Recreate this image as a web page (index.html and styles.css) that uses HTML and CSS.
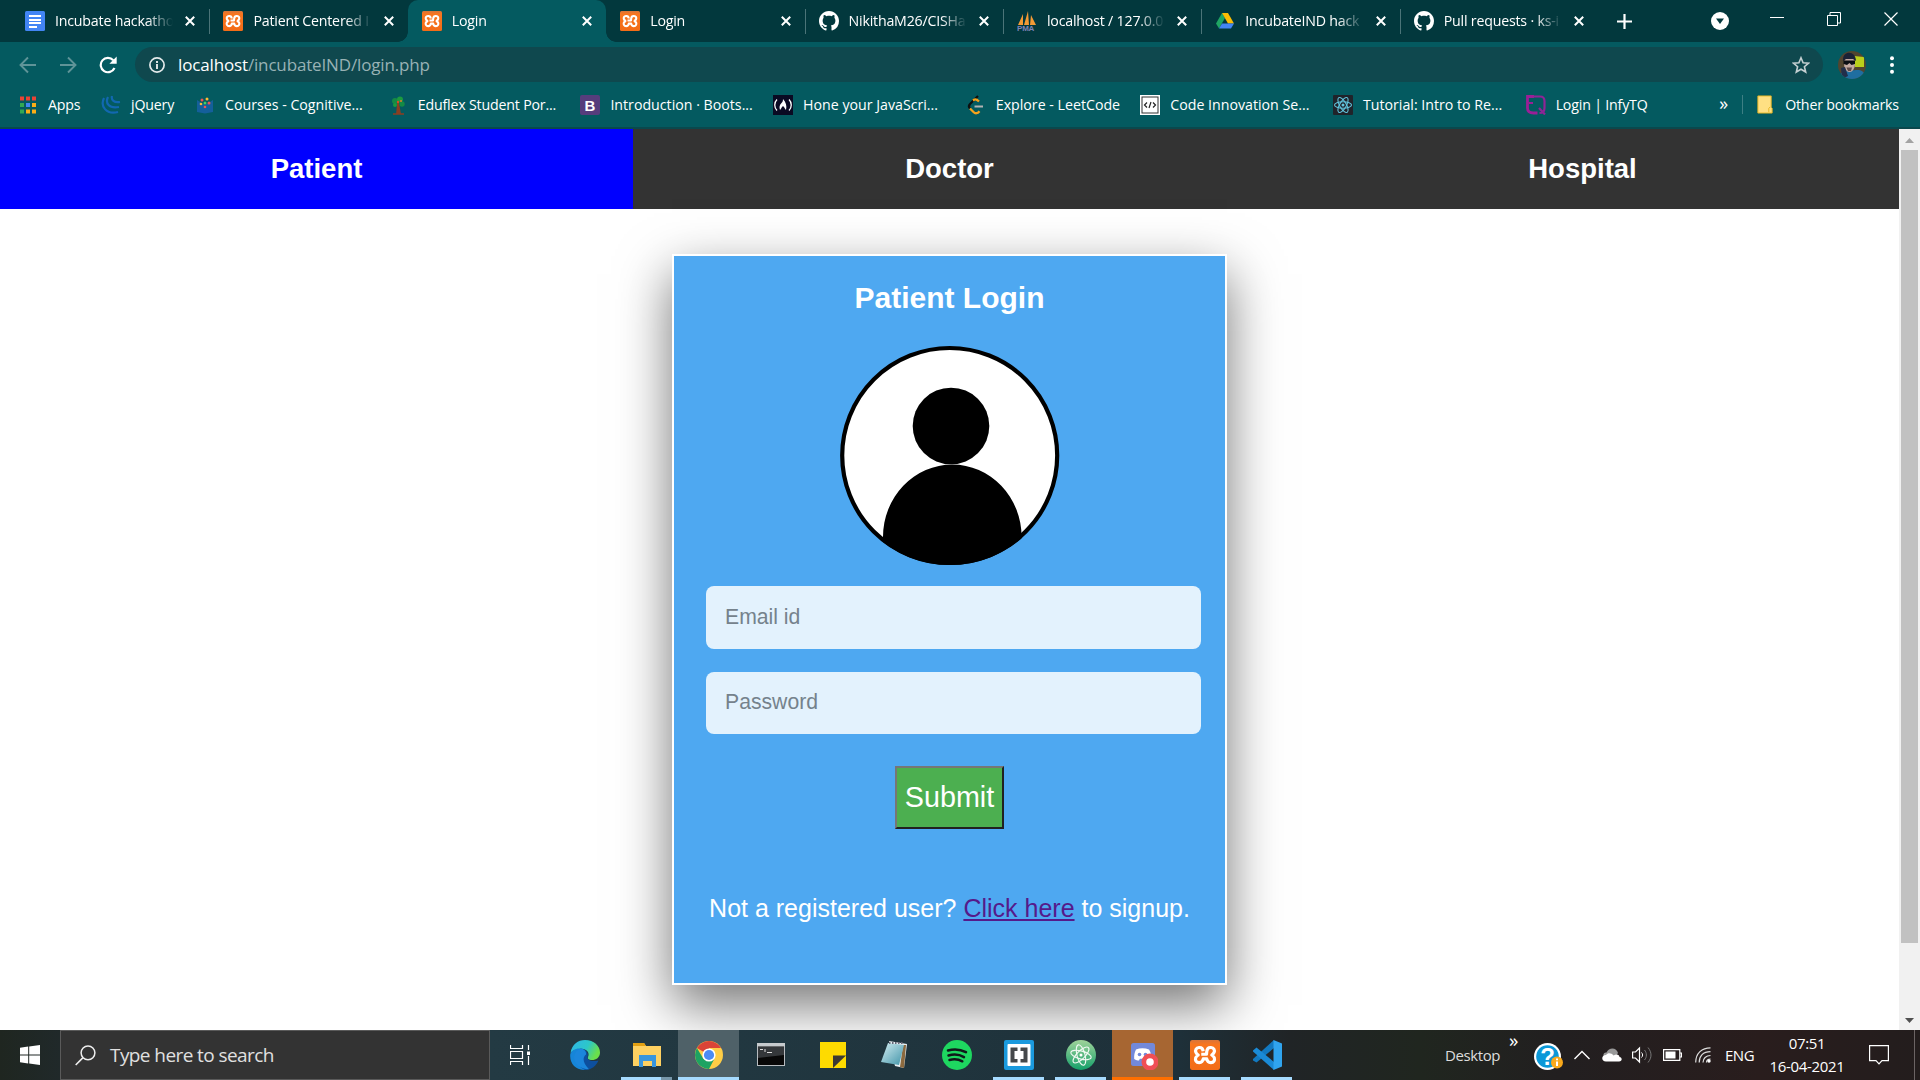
FILE: index.html
```html
<!DOCTYPE html>
<html lang="en">
<head>
<meta charset="utf-8">
<title>Login</title>
<link rel="stylesheet" href="styles.css">
</head>
<body>
<svg class="defs" width="0" height="0">
  <defs>
    <linearGradient id="gx" x1="0" y1="0" x2="0" y2="1"><stop offset="0" stop-color="#d9753a"/><stop offset=".15" stop-color="#f8761f"/><stop offset="1" stop-color="#f36c17"/></linearGradient>
    <linearGradient id="ge" x1="0" y1="0" x2="1" y2=".4"><stop offset="0" stop-color="#2fb4ea"/><stop offset=".6" stop-color="#2cc7c8"/><stop offset="1" stop-color="#6be04a"/></linearGradient>
    <linearGradient id="gn" x1="0" y1="0" x2="1" y2="1"><stop offset="0" stop-color="#d4eef2"/><stop offset="1" stop-color="#3f93a8"/></linearGradient>
    <linearGradient id="ga" x1="0" y1="0" x2="0" y2="1"><stop offset="0" stop-color="#a0d39a"/><stop offset="1" stop-color="#14a06a"/></linearGradient>
    <clipPath id="face"><circle cx="14" cy="14" r="14"/></clipPath>
    <clipPath id="disc"><circle cx="110" cy="110.500" r="109.500"/></clipPath>
  </defs>
  <symbol id="xampp" viewBox="0 0 20 20"><rect width="20" height="20" rx="1.500" fill="url(#gx)"/><path d="M8.800 7.500C8.600 5.600 7.500 4.900 6 5c-2 .1-2.600 1.800-2.100 3.200.3.900.9 1.300 1.600 1.800-.8.500-1.400 1-1.700 1.900-.5 1.500.3 3.200 2.300 3.200 1.700 0 2.500-1.100 2.700-2.500h2.400c.2 1.400 1 2.500 2.700 2.500 2 0 2.800-1.700 2.300-3.200-.3-.9-.9-1.400-1.700-1.900.7-.5 1.300-.9 1.600-1.800C16.600 6.800 16 5.100 14 5c-1.500-.1-2.600.6-2.800 2.500L11 9.500H7.500" fill="none" stroke="#fff" stroke-width="2.100" stroke-linejoin="round"/></symbol>
  <symbol id="github" viewBox="0 0 16 16"><path fill="#fff" fill-rule="evenodd" d="M8 0C3.580 0 0 3.580 0 8c0 3.540 2.290 6.530 5.470 7.590.4.070.55-.17.55-.38 0-.19-.01-.82-.01-1.490-2.010.37-2.530-.49-2.690-.94-.09-.23-.48-.94-.82-1.130-.28-.15-.68-.52-.01-.53.63-.01 1.080.58 1.230.82.72 1.210 1.870.87 2.330.66.070-.52.28-.87.51-1.070-1.780-.2-3.640-.89-3.640-3.950 0-.87.31-1.590.82-2.150-.08-.2-.36-1.020.08-2.120 0 0 .67-.21 2.200.82.640-.18 1.320-.27 2-.27s1.360.09 2 .27c1.530-1.040 2.200-.82 2.200-.82.440 1.100.16 1.920.08 2.120.51.560.82 1.270.82 2.150 0 3.070-1.870 3.750-3.650 3.950.29.25.54.73.54 1.480 0 1.070-.01 1.930-.01 2.200 0 .21.15.46.55.38A8.010 8.010 0 0 0 16 8c0-4.420-3.580-8-8-8z"/></symbol>
  <symbol id="x" viewBox="0 0 10 10"><path d="M.8.8l8.400 8.400M9.200.8L.8 9.200" stroke="#fff" stroke-width="2"/></symbol>
</svg>

<header class="browser">
  <div class="tabstrip">
    <div class="tab"><svg class="fav" viewBox="0 0 20 20"><rect width="20" height="20" rx="1.500" fill="#4285f4"/><path d="M4 5h12M4 9h12M4 12h12M4 16h8" stroke="#fff" stroke-width="1.800"/></svg><span class="tab-title">Incubate hackathon</span><svg class="close"><use href="#x"/></svg></div>
    <div class="tab sep"><svg class="fav"><use href="#xampp"/></svg><span class="tab-title">Patient Centered I</span><svg class="close"><use href="#x"/></svg></div>
    <div class="tab active"><svg class="fav"><use href="#xampp"/></svg><span class="tab-title">Login</span><svg class="close"><use href="#x"/></svg></div>
    <div class="tab"><svg class="fav"><use href="#xampp"/></svg><span class="tab-title">Login</span><svg class="close"><use href="#x"/></svg></div>
    <div class="tab sep"><svg class="fav"><use href="#github"/></svg><span class="tab-title">NikithaM26/CISHa</span><svg class="close"><use href="#x"/></svg></div>
    <div class="tab sep"><svg class="fav" viewBox="0 0 20 20"><path d="M1 14L6 3v11zM7 14L11 0l1 14zM13 14l1-10 5 10z" fill="#f39a35"/><text x="0" y="19.500" class="pma">PMA</text></svg><span class="tab-title">localhost / 127.0.0</span><svg class="close"><use href="#x"/></svg></div>
    <div class="tab sep"><svg class="fav" viewBox="0 0 20 20"><path d="M7 2L1 12.500l3 5L10 7z" fill="#1fa463"/><path d="M7 2h6l6 10.500h-6z" fill="#fbbc04"/><path d="M4 17.500l3-5h12l-3 5z" fill="#4285f4"/></svg><span class="tab-title">IncubateIND hack</span><svg class="close"><use href="#x"/></svg></div>
    <div class="tab sep"><svg class="fav"><use href="#github"/></svg><span class="tab-title">Pull requests · ks-i</span><svg class="close"><use href="#x"/></svg></div>
    <div class="newtab"><svg width="15" height="15" viewBox="0 0 15 15"><path d="M7.500 0v15M0 7.500h15" stroke="#fff" stroke-width="2.200"/></svg></div>
    <div class="winctl">
      <svg width="18" height="18" viewBox="0 0 18 18"><circle cx="9" cy="9" r="9" fill="#fff"/><path d="M5 6.500h8L9 12z" fill="#02383d"/></svg>
      <svg width="14" height="14" viewBox="0 0 14 14"><path d="M0 5.500h14" stroke="#fff"/></svg>
      <svg width="14" height="14" viewBox="0 0 14 14"><path d="M.5 3.500h10v10H.5zM3 3V.5h10.500v10.500H11" stroke="#fff" fill="none"/></svg>
      <svg width="14" height="14" viewBox="0 0 14 14"><path d="M.5.5l13 13M13.500.5l-13 13" stroke="#fff" stroke-width="1.200"/></svg>
    </div>
  </div>
  <div class="toolbar">
    <svg class="tb" viewBox="0 0 18 18"><path d="M17 9H2M9 1.500L1.500 9 9 16.500" stroke="#5f9498" stroke-width="1.900" fill="none"/></svg>
    <svg class="tb" viewBox="0 0 18 18"><path d="M1 9h15M9 1.500L16.500 9 9 16.500" stroke="#5f9498" stroke-width="1.900" fill="none"/></svg>
    <svg class="tb" viewBox="0 0 18 18"><path d="M15.500 12A7.200 7.200 0 1 1 14.300 4.200" stroke="#fff" stroke-width="2.200" fill="none"/><path d="M17.700.5v7.300h-7.300z" fill="#fff"/></svg>
    <div class="omnibox">
      <svg width="16" height="16" viewBox="0 0 16 16"><circle cx="8" cy="8" r="7.100" fill="none" stroke="#e4eaeb" stroke-width="1.700"/><path d="M8 7v5M8 4v1.900" stroke="#e4eaeb" stroke-width="1.900"/></svg>
      <span class="url">localhost<span class="path">/incubateIND/login.php</span></span>
      <svg class="star" width="18" height="18" viewBox="0 0 18 18"><path d="M9 1.800l2.100 5 5.400.4-4.100 3.500 1.300 5.300L9 13.200 4.300 16l1.300-5.300L1.500 7.200l5.400-.4z" fill="none" stroke="#c4cfd1" stroke-width="1.600"/></svg>
    </div>
    <svg width="28" height="28" viewBox="0 0 28 28"><g clip-path="url(#face)"><rect width="28" height="28" fill="#51452f"/><path d="M16 5l10 1v10h-9z" fill="#b9cf1a"/><path d="M1 28c1-8 8-10 13-9s12-3 14 9z" fill="#1f6ea0"/><ellipse cx="11.500" cy="13" rx="5.500" ry="8" fill="#c3a9a2"/><path d="M5 10C4-1 18-1 18 10l-3-2H8z" fill="#1b2236"/><path d="M5.500 9.500h11.500v3.500l-3.500 1-2-2-2.500 2-3.500-1z" fill="#0b0e14"/><path d="M3 17l4-1 3 9-6 3z" fill="#222e4a"/><path d="M8.500 16.500h5.500l-1 3.500h-3z" fill="#5f4a48"/></g></svg>
    <svg class="dots" width="4" height="18" viewBox="0 0 4 18"><circle cx="2" cy="2.200" r="2" fill="#fff"/><circle cx="2" cy="9" r="2" fill="#fff"/><circle cx="2" cy="15.800" r="2" fill="#fff"/></svg>
  </div>
  <nav class="bookmarks">
    <a class="bm w-apps"><svg viewBox="0 0 20 20"><path d="M2 3.500h4M8 3.500h4M14 3.500h4" stroke="#ea4335" stroke-width="4"/><path d="M2 10h4M2 16.500h4" stroke="#34a853" stroke-width="4"/><path d="M8 10h4" stroke="#4285f4" stroke-width="4"/><path d="M8 16.500h4M14 16.500h4M14 10h4" stroke="#fbae17" stroke-width="4"/></svg>Apps</a>
    <a class="bm w-jq"><svg viewBox="0 0 20 20"><path d="M3 3c-4 8 2 17 14 14M7 2c-3 6 1 12 11 10M11 1c-1 4 2 7 8 6" fill="none" stroke="#1268b0" stroke-width="2.200"/></svg>jQuery</a>
    <a class="bm w wide"><svg viewBox="0 0 20 20"><path d="M2 5v12l8 1.500 8-1.500V5l-8 5z" fill="#145f9b"/><circle cx="7" cy="5" r="1.500" fill="#e55"/><circle cx="12" cy="4" r="1.500" fill="#fb3"/><circle cx="10" cy="8" r="1.500" fill="#4c6"/><circle cx="14" cy="8" r="1.500" fill="#e55"/><circle cx="6" cy="9" r="1.300" fill="#fb3"/><circle cx="10" cy="12" r="1.300" fill="#e55"/></svg>Courses - Cognitive...</a>
    <a class="bm w"><svg viewBox="0 0 20 20"><path d="M10 7l-1 11h3zM5 19h11" stroke="#8a3f22" stroke-width="1.600" fill="#8a3f22"/><circle cx="7" cy="6" r="3" fill="#158a45"/><circle cx="12" cy="4.500" r="3" fill="#1c9a3f"/><circle cx="14" cy="9" r="2.700" fill="#158a45"/><circle cx="7" cy="10" r="2" fill="#1c9a3f"/><circle cx="10" cy="7" r="1.200" fill="#d84a2b"/><circle cx="13" cy="6" r="1" fill="#e0792b"/></svg>Eduflex Student Por...</a>
    <a class="bm w wide"><svg viewBox="0 0 20 20"><rect width="20" height="20" rx="2" fill="#563d7c"/><text x="10" y="15.500" class="bs">B</text></svg>Introduction · Boots...</a>
    <a class="bm w wide"><svg viewBox="0 0 20 20"><rect width="20" height="20" fill="#0a0a23"/><path d="M4 4.500c-3 3-3 8 0 11M16 4.500c3 3 3 8 0 11" stroke="#fff" stroke-width="1.300" fill="none"/><path d="M10 4c3 3 4 7 3 11-1-1-1-2-3-4-2 2-2 3-3 4-1-3-.5-5 1.500-7C9.500 7 10 6 10 4z" fill="#fff"/></svg>Hone your JavaScri...</a>
    <a class="bm w-leet wide"><svg viewBox="0 0 20 20"><path d="M12 1L4 9c-1.500 1.600-1.500 3 0 4.500" fill="none" stroke="#0c1010" stroke-width="2.200"/><path d="M7 5.500l1.500-1c1.500-.6 2.500 0 4.500 2M4 13.500l3.500 3.500c2 2 4 1.500 6-.8" fill="none" stroke="#f7a21b" stroke-width="2.300"/><path d="M8.500 11.500H17" stroke="#b3b3b3" stroke-width="2"/></svg>Explore - LeetCode</a>
    <a class="bm w wide"><svg viewBox="0 0 20 20"><rect width="20" height="20" fill="#fff"/><rect x="2" y="2" width="16" height="16" fill="none" stroke="#333"/><path d="M7 7.500L4.500 10 7 12.500M13 7.500l2.500 2.500-2.500 2.500M11 7l-2 6" stroke="#222" stroke-width="1.200" fill="none"/></svg>Code Innovation Se...</a>
    <a class="bm w wide"><svg viewBox="0 0 20 20"><rect width="20" height="20" rx="1" fill="#20232a"/><g fill="none" stroke="#61c5de" stroke-width="1.100"><ellipse cx="10" cy="10" rx="8.500" ry="3.300"/><ellipse cx="10" cy="10" rx="8.500" ry="3.300" transform="rotate(60 10 10)"/><ellipse cx="10" cy="10" rx="8.500" ry="3.300" transform="rotate(120 10 10)"/></g><circle cx="10" cy="10" r="1.500" fill="#61c5de"/></svg>Tutorial: Intro to Re...</a>
    <a class="bm w-inf"><svg viewBox="0 0 20 20"><path d="M8 1.500H1.500V13c0 3 2 5 6 5h4" fill="none" stroke="#9a1f97" stroke-width="2.800"/><path d="M7 1.500h7c3 0 4.500 2 4.500 4.500V13c0 3-2 5-5 5M13 13l6 6.500" fill="none" stroke="#8f2496" stroke-width="2.200"/><path d="M3 8h4" stroke="#9a1f97" stroke-width="2"/></svg>Login | InfyTQ</a>
    <span class="more">»</span>
    <a class="bm other"><svg class="folder" viewBox="0 0 16 20"><path d="M.5 1h14v12l1 1v5H.5z" fill="#ffe083" stroke="#e6b422"/><path d="M12 18v-4l1.500-1.500" stroke="#e6b422" fill="none"/></svg>Other bookmarks</a>
  </nav>
</header>

<main class="viewport">
  <div class="page">
    <nav class="roles"><a class="on">Patient</a><a>Doctor</a><a>Hospital</a></nav>
    <section class="card">
      <h1>Patient Login</h1>
      <svg class="avatar" viewBox="0 0 220 221"><circle cx="109.700" cy="110.500" r="107.500" fill="#fff" stroke="#000" stroke-width="4.200"/><g clip-path="url(#disc)"><circle cx="111" cy="81" r="38.300"/><path d="M43 230v-38a69.300 72.500 0 0 1 138.600 0v38z"/></g></svg>
      <form class="login">
        <input class="field" type="text" placeholder="Email id">
        <input class="field second" type="password" placeholder="Password">
        <button class="submit" type="button">Submit</button>
      </form>
      <p class="signup">Not a registered user? <a href="#">Click here</a> to signup.</p>
    </section>
  </div>
  <div class="scrollbar">
    <svg width="21" height="21" viewBox="0 0 21 21"><path d="M6 14h9l-4.500-5z" fill="#a3a3a3"/></svg>
    <div class="thumb"></div>
    <svg class="down" width="21" height="21" viewBox="0 0 21 21"><path d="M6 9h9l-4.500 5z" fill="#505050"/></svg>
  </div>
</main>

<footer class="taskbar">
  <div class="start"><svg width="20" height="20" viewBox="0 0 20 20"><path d="M0 2.800l8.200-1.200v7.900H0zM9.200 1.400L20 0v9.500H9.200zM0 10.500h8.200v7.900L0 17.200zM9.200 10.500H20V20L9.200 18.600z" fill="#fff"/></svg></div>
  <div class="search"><svg width="21" height="21" viewBox="0 0 21 21"><circle cx="13" cy="7.800" r="6.900" fill="none" stroke="#eee" stroke-width="1.500"/><path d="M8 12.600L.7 20" stroke="#eee" stroke-width="1.600"/></svg>Type here to search</div>
  <div class="taskview"><svg width="20" height="20" viewBox="0 0 20 20"><path d="M.5 0v3.500h12V0M.5 20v-3.500h12V20M.5 6.500h12v7H.5zM18.500 0v5M18.500 11v9" stroke="#fff" fill="none" stroke-width="1.200"/><path d="M17 6.500h3v3.500h-3z" fill="#fff"/></svg></div>
  <div class="apps">
    <div class="app"><svg viewBox="0 0 30 30"><path d="M.5 13C2 4 8 0 15 0c9 0 15 6 15 12.500 0 5-4 7.500-8 7.500-3 0-5-1-4-3 2-4-1-8-6-8C6 9 2 11 .5 13z" fill="url(#ge)"/><path d="M.3 14c1-3 5-6 10-5.500C4 14 6 26 18 29.500 8 32-1 25 .3 14z" fill="#1685d8"/><path d="M10.500 8.500C16 9 19 13 17.500 17c-.5 3 3 5 11 3.500-2 5-7 9.500-13.500 9.500C6 26 3 13 10.500 8.500z" fill="#0d4f9e"/><path d="M10.500 8.500c4 .5 6 3 5.500 6-4 3-3 9 3 14.800C4 29-1 14 10.500 8.500z" fill="#1b86dc"/></svg></div>
    <div class="app run stack"><svg viewBox="0 0 30 30"><path d="M1 3h11l2 3h15v20H1z" fill="#ffd161"/><path d="M1 3h11l2 3H1z" fill="#e3a012"/><path d="M7 27V15h17v12h-4v-6h-9v6z" fill="#3a96dd"/></svg></div>
    <div class="app run current"><svg viewBox="0 0 30 30"><circle cx="15" cy="15" r="14" fill="#ffcd46"/><path d="M15 15L2.900 8A14 14 0 0 1 27.100 8H15z" fill="#db4437"/><path d="M2.900 8A14 14 0 0 0 15 29l5.500-10.500L9.500 19z" fill="#1da362"/><circle cx="15" cy="15" r="6.600" fill="#fff"/><circle cx="15" cy="15" r="5.100" fill="#4c8bf5"/></svg></div>
    <div class="app"><svg viewBox="0 0 30 30"><rect x="1.500" y="3.500" width="27" height="22" fill="#080808" stroke="#b8bcc0"/><rect x="1" y="3" width="28" height="3.500" fill="#c6cacd"/><path d="M2 7h26v8L2 18z" fill="#34373a"/><path d="M4 9.500h3M9 9v3M11 12.500h5" stroke="#ddd"/></svg></div>
    <div class="app"><svg viewBox="0 0 30 30"><path d="M2 2h26v26H2z" fill="#fedb00"/><path d="M15 28V15.500h13z" fill="#3b3a33"/></svg></div>
    <div class="app"><svg viewBox="0 0 30 30"><path d="M9 1l18 3-3 24-9-2z" fill="#e7edf0"/><path d="M26 5l-2 23-4-1 3-22z" fill="#8c6a3f"/><path d="M8 3l16 2-5 20L1 22z" fill="url(#gn)"/><path d="M9 3h15" stroke="#667" stroke-width="2" stroke-dasharray="1.500 1.500"/></svg></div>
    <div class="app"><svg viewBox="0 0 30 30"><circle cx="15" cy="15" r="15" fill="#1ed760"/><path d="M6 10.500c6-1.800 12.500-1.200 18 1.700M6.500 15.500c5.500-1.500 11-1 15.500 1.600M7.500 20c4.500-1.200 9-.8 12.800 1.300" stroke="#10191a" stroke-width="2.500" fill="none" stroke-linecap="round"/></svg></div>
    <div class="app run"><svg viewBox="0 0 30 30"><rect width="30" height="30" rx="2" fill="#1b9ade"/><rect x="3.500" y="4" width="23" height="22" rx="1" fill="#fff"/><path d="M13.500 7.500H6.500v15h7v-3.500H10.500v-8h3zM16.500 7.500h7v15h-7v-3.500h3v-8h-3z" fill="#45484b"/></svg></div>
    <div class="app run"><svg viewBox="0 0 30 30"><circle cx="15" cy="15" r="15" fill="url(#ga)"/><g fill="none" stroke="#f2faf4" stroke-width="1.100"><ellipse cx="15" cy="15" rx="10.500" ry="4" transform="rotate(15 15 15)"/><ellipse cx="15" cy="15" rx="10.500" ry="4" transform="rotate(75 15 15)"/><ellipse cx="15" cy="15" rx="10.500" ry="4" transform="rotate(135 15 15)"/></g><circle cx="15" cy="15" r="1.500" fill="#fff"/></svg></div>
    <div class="app run alert"><svg viewBox="0 0 30 30"><rect x="3" y="3" width="24" height="23" rx="2.500" fill="#7289da"/><path d="M8 9.500c4-1.800 9-1.800 13 0 2 3 2.500 6 2.300 9.500-2 1.300-3.500 1.500-4.500 1.500l-1-1.800h-6L11 20.500c-1.500 0-3-.5-4.800-1.500C6 15 6.500 12.500 8 9.500z" fill="#fff"/><circle cx="11.500" cy="14.500" r="1.800" fill="#7289da"/><circle cx="17.500" cy="14.500" r="1.800" fill="#7289da"/><circle cx="22" cy="22" r="8.500" fill="#f04f55"/><circle cx="22" cy="22" r="3.800" fill="#fff"/></svg></div>
    <div class="app run"><svg viewBox="0 0 20 20"><use href="#xampp"/></svg></div>
    <div class="app run"><svg viewBox="0 0 30 30"><path d="M22 0v8L4.500 22.500 1 20.500V19z" fill="#1279c0"/><path d="M1 10.500l3.500-3L22 22v8L1 11.500z" fill="#1a8ad6"/><path d="M21.500 0L30 3.500v23L21.500 30z" fill="#30a4ee"/></svg></div>
  </div>
  <div class="tray">
    <span class="desk">Desktop</span><span class="chev">»</span>
    <svg class="help" width="29" height="28" viewBox="0 0 29 28"><circle cx="13.500" cy="13.500" r="13.500" fill="#fff"/><circle cx="13.500" cy="13.500" r="11.300" fill="#0b98d8"/><text x="13.500" y="22" class="q">?</text><circle cx="23" cy="19.500" r="6" fill="#f9a91b"/><path d="M23 18.500v4.500M23 15.500v1.700" stroke="#fff" stroke-width="2"/></svg>
    <svg class="up" width="16" height="10" viewBox="0 0 16 10"><path d="M.5 9L8 1.500 15.500 9" fill="none" stroke="#fff" stroke-width="1.400"/></svg>
    <svg class="cloud" width="20" height="14" viewBox="0 0 20 14"><path d="M4 10C0 9 1 4 4.500 4.500 7-1.500 15-.5 16 5l-3 4z" fill="#999"/><path d="M4 13.500c-5 0-5-6.500 0-6.500C6 4.500 9.500 5 11.500 7.500c3-2 6-1 6 1.500 3 .5 3 4.500-.5 4.500z" fill="#fff"/></svg>
    <svg class="vol" width="20" height="18" viewBox="0 0 20 18"><path d="M.6 6h2.900l4-4v14l-4-4H.6z" fill="none" stroke="#fff" stroke-width="1.200"/><path d="M9.500 6.500c1.500 1.500 1.500 3.500 0 5" fill="none" stroke="#fff"/><path d="M12.500 4c2.500 3 2.500 7 0 10M16 1.500c4 5 4 10 0 15" fill="none" stroke="#777"/></svg>
    <svg class="bat" width="19" height="12" viewBox="0 0 19 12"><path d="M.6.6h16.200v10.800H.6zM17 4h1.500v4H17" fill="none" stroke="#fff" stroke-width="1.200"/><path d="M2.500 2.500h10v7h-10z" fill="#fff"/></svg>
    <svg class="wifi" width="16" height="16" viewBox="0 0 16 16"><g fill="none" stroke="#ddd" stroke-width="1.200"><path d="M.7 15.500C.7 6 7 .8 15.500.8M4.200 15.500C4.200 9 8 4.700 15.500 4.700M8 15.500c0-4 3-7 7.500-7M11.500 15.500c0-2 1-3.500 4-3.500"/></g><circle cx="14" cy="14" r="1.700" fill="#fff"/></svg>
    <span class="lang">ENG</span>
    <div class="clock"><span>07:51</span><span>16-04-2021</span></div>
    <svg class="note" width="20" height="20" viewBox="0 0 20 20"><path d="M.6.600h18.800v15H13l-3 3.200-3-3.200H.6z" fill="none" stroke="#fff" stroke-width="1.200"/></svg>
    <div class="peek"></div>
  </div>
</footer>
</body>
</html>
```
FILE: styles.css
```css
* { box-sizing: border-box; }
body { margin: 0; width: 1920px; height: 1080px; overflow: hidden; background: #fff; display: flex; flex-direction: column; font-family: "Open Sans", "Noto Sans", sans-serif; }
svg { display: block; flex: none; }
.defs { position: absolute; }

/* Browser chrome */
.browser { height: 129px; flex: none; background: #045a60; color: #fff; border-bottom: 2px solid #0a484d; }
.tabstrip { display: flex; height: 42px; background: #02383d; padding-left: 11px; }
.tab { width: 198.400px; flex: none; display: flex; align-items: center; padding: 0 14px; position: relative; font-size: 14.200px; letter-spacing: -.2px; }
.tab.sep::before { content: ""; position: absolute; left: 0; top: 9px; width: 1px; height: 25px; background: #4b7478; }
.fav { width: 20px; height: 20px; }
.tab-title { width: 119px; margin-left: 10px; margin-right: 12px; overflow: hidden; white-space: nowrap; line-height: 22px; -webkit-mask-image: linear-gradient(90deg, #000 78%, transparent); mask-image: linear-gradient(90deg, #000 78%, transparent); }
.close { width: 10px; height: 10px; }
.tab.active { background: #045a60; border-radius: 10px 10px 0 0; }
.tab.active::before, .tab.active::after { content: ""; position: absolute; bottom: 0; width: 10px; height: 10px; }
.tab.active::before { left: -10px; background: radial-gradient(circle at 0 0, transparent 9.500px, #045a60 10px); }
.tab.active::after { right: -10px; background: radial-gradient(circle at 100% 0, transparent 9.500px, #045a60 10px); }
.newtab { width: 52px; display: flex; align-items: center; justify-content: center; }
.winctl { margin-left: auto; display: flex; gap: 43px; padding: 12px 22px 0 0; }
.winctl svg:first-child { margin-right: -2px; }
.pma { font: bold 8px "Liberation Sans", sans-serif; fill: #7c83b5; }
.toolbar { display: flex; align-items: center; height: 45px; padding: 0 26px 0 19px; }
.tb { width: 18px; height: 18px; margin-right: 22px; }
.omnibox { display: flex; align-items: center; width: 1689px; height: 35px; border-radius: 18px; background: #0f484e; padding: 0 13px 0 14px; margin: 0 15px 0 -4px; }
.url { margin-left: 13px; font-size: 17px; letter-spacing: -.15px; line-height: 24px; }
.path { color: #98b2b5; }
.star { margin-left: auto; }
.dots { margin-left: 24px; }
.bookmarks { display: flex; align-items: center; height: 35px; padding-left: 18px; font-size: 14.200px; letter-spacing: -.18px; }
.bm { display: flex; align-items: center; flex: none; white-space: nowrap; gap: 10px; }
.bm svg { width: 20px; height: 20px; }
.bm.w { width: 192.700px; }
.bm.w-apps { width: 83px; }
.bm.w-jq { width: 94px; }
.bm.w-leet { width: 174.500px; }
.bm.w-inf { width: 193.500px; }
.bm.wide { letter-spacing: 0; }
.more { font-size: 18px; line-height: 20px; width: 23px; padding-bottom: 3px; }
.other { border-left: 1px solid #3d7f84; padding-left: 14px; gap: 12px; }
.bm svg.folder { width: 16px; height: 19px; }

/* Page */
.viewport { display: flex; height: 901px; flex: none; overflow: hidden; font-family: "Liberation Sans", Arial, sans-serif; }
.page { width: 1899px; overflow: hidden; }
.roles { display: flex; height: 80px; background: #333; }
.roles a { flex: 1; display: flex; align-items: center; justify-content: center; color: #fff; font-size: 27.500px; font-weight: bold; }
.roles .on { background: #00f; }
.card { width: 555px; height: 731px; margin: 45px auto 0; border: 2px solid #fff; background: #4ea8f1; box-shadow: 0 20px 50px rgba(0, 0, 0, .55); display: flex; flex-direction: column; align-items: center; }
.card h1 { margin: 24px 0 0; color: #fff; font-size: 30px; line-height: 36px; }
.avatar { width: 220px; height: 221px; margin-top: 29px; }
.login { display: flex; flex-direction: column; align-items: center; margin-top: 20px; }
.field { width: 495px; height: 63px; margin-left: 8px; border: 0; border-radius: 8px; background: #e3f2fd; padding: 0 19px 2px; font: 21.200px "Liberation Sans", Arial, sans-serif; outline: 0; }
.field::placeholder { color: #75828c; opacity: 1; }
.field.second { margin-top: 23px; height: 62px; }
.submit { width: 109px; height: 63px; margin-top: 32px; padding: 0; border: 2px solid; border-color: #767676 #212121 #212121 #767676; background: #4caf50; color: #fff; font: 28.750px "Liberation Sans", Arial, sans-serif; }
.signup { margin: 64px 0 0; color: #fff; font-size: 25px; line-height: 30px; white-space: nowrap; }
.signup a { color: #551a8b; }
.scrollbar { width: 21px; background: #f1f1f1; display: flex; flex-direction: column; }
.thumb { width: 17px; height: 793px; margin: 0 2px; background: #c1c1c1; }
.down { margin-top: auto; }

/* Taskbar */
.taskbar { display: flex; height: 50px; flex: none; color: #fff; background: linear-gradient(90deg, #1f2620 0, #20292a 60px, #233a43 490px, #20353e 900px, #1e3039 1180px, #202426 1290px, #20261f 1420px, #221f20 1560px, #291d1d 1760px, #231d1d 1920px); }
.start { width: 60px; display: flex; align-items: center; justify-content: center; }
.search { width: 430px; border: 1px solid #5a5a5a; background: #333; color: #e0e0e0; display: flex; align-items: center; padding-left: 14px; gap: 14px; font-size: 19px; letter-spacing: -.58px; }
.taskview { width: 64px; padding: 15px 20px; }
.apps { display: flex; gap: 1px; }
.app { width: 61px; height: 50px; display: flex; align-items: center; justify-content: center; position: relative; }
.app svg { width: 30px; height: 30px; }
.app.run::after { content: ""; position: absolute; left: 5px; right: 5px; bottom: 0; height: 3px; background: #a6dbff; }
.app.stack::after { background: linear-gradient(90deg, #a6dbff 40px, #7796a8 40px); }
.app.current { background: #4f6168; }
.app.current::after { left: 0; right: 0; }
.app.alert { background: #a76632; }
.app.alert::after { left: 0; right: 0; background: #ff6f00; }
.tray { display: flex; align-items: center; margin-left: auto; width: 475px; flex: none; }
.desk { width: 64px; font-size: 15px; letter-spacing: -.4px; color: #ddd; }
.chev { width: 25px; font-size: 19px; line-height: 18px; margin-top: -30px; }
.help { margin-top: 3px; }
.q { font: bold 24px "Liberation Sans", sans-serif; fill: #fff; text-anchor: middle; }
.bs { font: bold 15px "Liberation Sans", sans-serif; fill: #fff; text-anchor: middle; }
.up { margin-left: 11px; }
.cloud { margin-left: 12px; }
.vol { margin-left: 10px; }
.bat { margin-left: 11px; }
.wifi { margin-left: 13px; }
.lang { margin-left: 14px; width: 31px; font-size: 15px; letter-spacing: -.5px; }
.clock { width: 76px; margin-left: 13px; margin-top: -1px; display: flex; flex-direction: column; align-items: center; font-size: 15px; line-height: 22.500px; letter-spacing: -.35px; white-space: nowrap; }
.note { margin-left: 24px; }
.peek { width: 1px; height: 50px; margin-left: 25px; background: #6b6464; }
```
